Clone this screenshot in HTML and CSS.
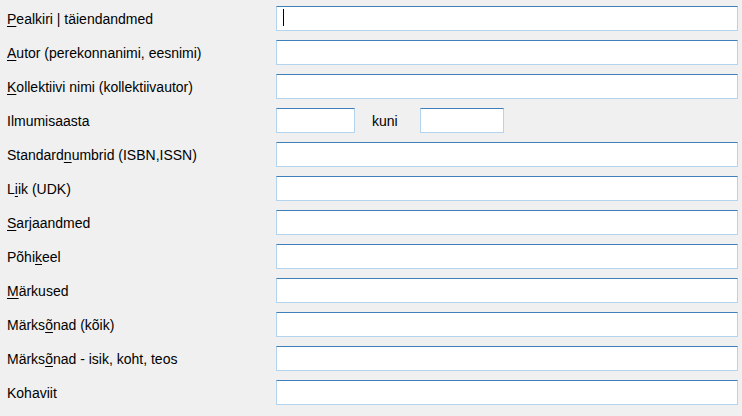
FILE: index.html
```html
<!DOCTYPE html>
<html lang="et">
<head>
  <meta charset="UTF-8">
  <title>Otsing</title>
  <link rel="stylesheet" href="styles.css">
</head>
<body>
  <form class="search-form">
    <div class="row">
      <label class="label"><u>P</u>ealkiri | täiendandmed</label>
      <div class="field focused">
        <input class="text-input" type="text">
        <span class="caret"></span>
      </div>
    </div>
    <div class="row">
      <label class="label"><u>A</u>utor (perekonnanimi, eesnimi)</label>
      <input class="text-input" type="text">
    </div>
    <div class="row">
      <label class="label"><u>K</u>ollektiivi nimi (kollektiivautor)</label>
      <input class="text-input" type="text">
    </div>
    <div class="row">
      <label class="label">Ilmumisaasta</label>
      <div class="year-range">
        <input class="text-input year-from" type="text">
        <span class="year-sep">kuni</span>
        <input class="text-input year-to" type="text">
      </div>
    </div>
    <div class="row">
      <label class="label">Standard<u>n</u>umbrid (ISBN,ISSN)</label>
      <input class="text-input" type="text">
    </div>
    <div class="row">
      <label class="label">L<u>i</u>ik (UDK)</label>
      <input class="text-input" type="text">
    </div>
    <div class="row">
      <label class="label"><u>S</u>arjaandmed</label>
      <input class="text-input" type="text">
    </div>
    <div class="row">
      <label class="label">Põhi<u>k</u>eel</label>
      <input class="text-input" type="text">
    </div>
    <div class="row">
      <label class="label"><u>M</u>ärkused</label>
      <input class="text-input" type="text">
    </div>
    <div class="row">
      <label class="label">Märks<u>õ</u>nad (kõik)</label>
      <input class="text-input" type="text">
    </div>
    <div class="row">
      <label class="label">Märks<u>õ</u>nad - isik, koht, teos</label>
      <input class="text-input" type="text">
    </div>
    <div class="row">
      <label class="label">Kohaviit</label>
      <input class="text-input" type="text">
    </div>
  </form>
</body>
</html>
```

FILE: styles.css
```css
body {
  margin: 0;
  padding: 0;
  background-color: #f0f0f0;
  color: #000;
  font-family: "Liberation Sans", Arial, sans-serif;
  font-size: 14px;
}
.search-form {
  display: flex;
  flex-direction: column;
  gap: 9px;
  padding: 6px 4px 0 7px;
}
.row {
  display: flex;
  align-items: center;
  height: 25px;
}
.label {
  width: 269px;
  flex-shrink: 0;
  white-space: nowrap;
}
.label u {
  text-underline-offset: 2px;
}
.field {
  flex: 1;
  display: flex;
  height: 25px;
  position: relative;
}
.text-input {
  flex: 1;
  box-sizing: border-box;
  height: 25px;
  margin: 0;
  padding: 0 6px;
  background-color: #fff;
  border: 1px solid #b3d3ee;
  border-top-color: #3d7fb6;
  border-radius: 0;
  outline: none;
  font: inherit;
}
.caret {
  position: absolute;
  left: 7px;
  top: 3px;
  width: 1px;
  height: 17px;
  background-color: #000;
}
.year-range {
  display: flex;
  align-items: center;
  height: 25px;
}
.year-from {
  flex: none;
  width: 79px;
}
.year-sep {
  margin: 0 22px 0 17px;
}
.year-to {
  flex: none;
  width: 84px;
}
```
